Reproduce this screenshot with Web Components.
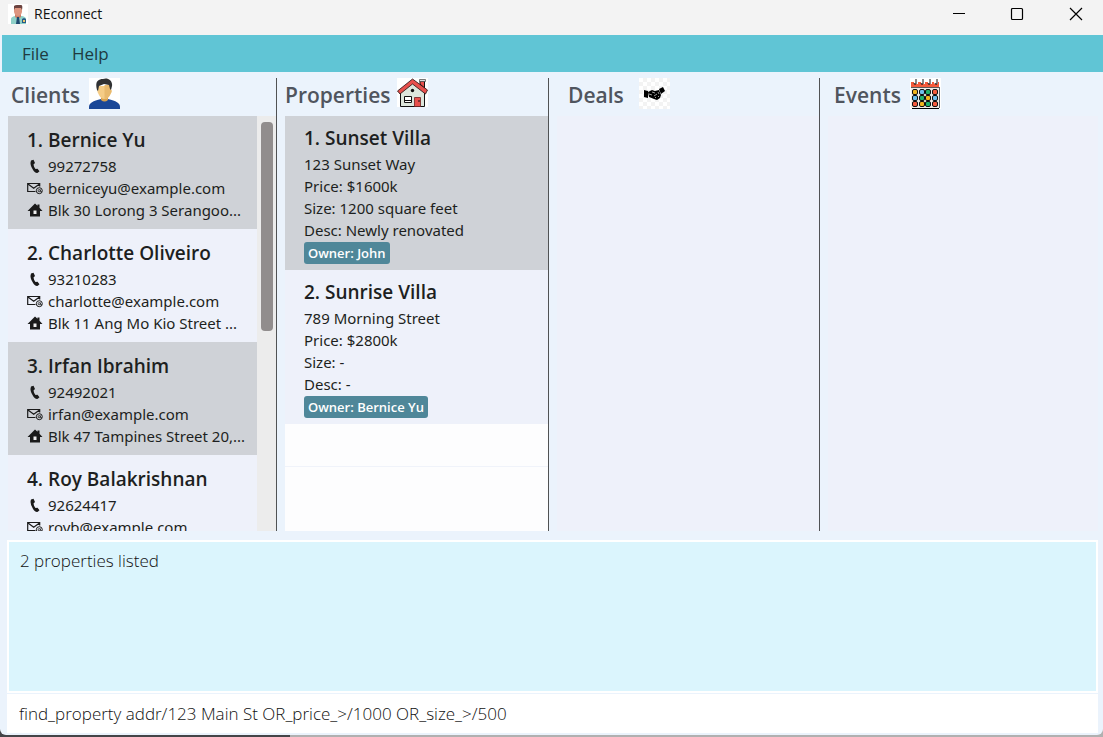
<!DOCTYPE html>
<html lang="en">
<head>
<meta charset="utf-8">
<title>REconnect</title>
<style>
html, body { margin: 0; height: 100%; }
body { font-family: "Noto Sans", "Open Sans", sans-serif; font-size: 15px; color: #1d1f21; background: #b4b4b4; }
</style>
</head>
<body>
<re-app>
  <re-titlebar slot="title">REconnect</re-titlebar>
  <re-menu slot="menu"><button type="button">File</button><button type="button">Help</button></re-menu>
  <re-column heading="Clients" icon="person" scroll style="--indent:3px;--gap:9px;--lead:0px">
    <re-client name="1. Bernice Yu" phone="99272758" email="berniceyu@example.com" odd>Blk 30 Lorong 3 Serangoo...</re-client>
    <re-client name="2. Charlotte Oliveiro" phone="93210283" email="charlotte@example.com">Blk 11 Ang Mo Kio Street ...</re-client>
    <re-client name="3. Irfan Ibrahim" phone="92492021" email="irfan@example.com" odd>Blk 47 Tampines Street 20,...</re-client>
    <re-client name="4. Roy Balakrishnan" phone="92624417" email="royb@example.com">Blk 45 Aljunied Street 85...</re-client>
  </re-column>
  <re-column heading="Properties" icon="house" style="--indent:0px;--gap:6px">
    <re-property name="1. Sunset Villa" address="123 Sunset Way" price="$1600k" size="1200 square feet" desc="Newly renovated" odd>John</re-property>
    <re-property name="2. Sunrise Villa" address="789 Morning Street" price="$2800k" size="-" desc="-">Bernice Yu</re-property>
    <re-empty></re-empty>
  </re-column>
  <re-column heading="Deals" icon="deal" style="--indent:11px;--gap:15px"></re-column>
  <re-column heading="Events" icon="calendar" style="--indent:6px;--gap:9px;--line:0px"></re-column>
  <re-console slot="console" message="2 properties listed" command="find_property addr/123 Main St OR_price_&gt;/1000 OR_size_&gt;/500"></re-console>
</re-app>

<script>
const define = (name, render) => customElements.define(name, class extends HTMLElement {
  constructor() { super(); this.attachShadow({ mode: 'open' }); }
  connectedCallback() { this.shadowRoot.innerHTML = render(this); }
});
const attr = (el, n) => (el.getAttribute(n) || '').replace(/&/g, '&amp;').replace(/"/g, '&quot;').replace(/</g, '&lt;').replace(/>/g, '&gt;');

const checker = () => {
  let s = '';
  for (let y = 0; y < 8; y++) for (let x = 0; x < 8; x++) if ((x + y) % 2) s += `M${x * 4} ${y * 4}h4v4h-4z`;
  return s;
};
const days = () => {
  const c = ['#f2b51d', '#6fc0ee', '#1fb26b', '#f45b3c'];
  const grid = [[0, 1, 2, 3], [1, 2, 0, 1], [3, 0, 2, 3]];
  return grid.map((r, j) => r.map((k, i) => `<rect x="${[3, 10, 16, 23][i] - .5}" y="${[12, 18, 24][j] - .5}" width="5" height="5" rx="1.500" fill="${c[k]}" stroke="#111" stroke-width="1"/>`).join('')).join('');
};
const pictures = {
  person: `<rect width="31" height="31" fill="#fff"/>
    <path d="M0 31v-2c0-4 4-6 12-8h7c8 2 12 4 12 8v2z" fill="#1b4797"/>
    <path d="M12 18h7v4q-3.500 3-7 0z" fill="#d7a250"/>
    <path d="M9 8h13v4q1 0 .5 2l-1 2q-2 5-6 5t-6-5l-1-2q-.5-2 .5-2z" fill="#f5cc86"/>
    <path d="M15.500 7H22v5q1 0 .5 2l-1 2q-2 5-6 5z" fill="#e8b96d"/>
    <path d="M8 12C6 5 8 1 14 1c4-2 10 1 9 7l-1 4-1-1-1-4-5-1-5 2-1 5z" fill="#303133"/>`,
  house: `<rect width="31" height="29" fill="#fff"/>
    <path d="M3.500 13L15.500 4l12 9v15.500h-24z" fill="#dde6dc" stroke="#111"/>
    <path d="M23 3h4.500v7L23 6z" fill="#e8504c" stroke="#111"/><path d="M22.500 1.500h6v2h-6z" fill="#ddd" stroke="#444" stroke-width=".7"/>
    <path d="M.500 13L15.500 1l15 11-2 4-13-10L3 16z" fill="#e8504c" stroke="#201010" stroke-width=".8"/>
    <circle cx="15.500" cy="12.500" r="1.700" fill="#111"/>
    <path d="M17.500 19.500h6v9h-6z" fill="#e8504c" stroke="#702020" stroke-width=".8"/><path d="M22 22v2" stroke="#111"/>
    <path d="M7.500 18.500h7v6h-7zM7 22.500h8" fill="#fff" stroke="#111"/>`,
  deal: `<rect width="31" height="31" fill="#fff"/><path d="${checker()}" fill="#f3f3f3"/>
    <path d="M5 12l4 1v7l-4-1z" fill="#000"/><path d="M9 14l4-2 3 1 4-1 2 5-1 3-3 2-3-1-5-2z" fill="#000"/><path d="M20 11l4-2 2 4-4 3z" fill="#000"/>
    <path d="M10 16l3 1M13 14l3 1M15 18l3-2M19 14l1 2M16 20l1-1M19 19l1-1" stroke="#fff" stroke-width=".6"/>`,
  calendar: `<rect width="31" height="31" fill="#fff"/>
    <path d="M1 9h28v21H1z" fill="#f3eee9"/><path d="M1 4h28v5H1z" fill="#f45b3c"/>
    <path d="M1 9.500h28M29.500 9v21" stroke="#333" stroke-width=".8"/><path d="M2 30.500h27" stroke="#000"/>
    <path d="M4 2h4v4H4zM11 2h4v4h-4zM18 2h4v4h-4zM24 2h4v4h-4z" fill="#fff"/>
    <path d="M6 1v5q-2 1-2-1M13 1v5q-2 1-2-1M20 1v5q-2 1-2-1M27 1v5q-2 1-2-1" fill="none" stroke="#111"/>${days()}`
};

define('re-app', () => `
<style>
  :host { display: flex; flex-direction: column; height: 100vh; }
  .window { flex: 1; min-height: 0; display: flex; flex-direction: column; background: #ebf3fc; border-radius: 0 0 6px 6px; overflow: hidden; }
  .columns { flex: 1; min-height: 0; display: grid; grid-template-columns: 269fr 272fr 271fr 278fr; grid-template-rows: minmax(0, 1fr); padding: 6px 5px 9px 8px; }
  .edge { flex: none; height: 8px; margin-top: -6px; z-index: -1; background: linear-gradient(90deg, #444548 290px, #b0b0b0 290px); }
</style>
<div class="window">
  <slot name="title"></slot><slot name="menu"></slot>
  <main class="columns"><slot></slot></main>
  <slot name="console"></slot>
</div>
<div class="edge"></div>`);

define('re-titlebar', () => `
<style>
  :host { flex: none; display: flex; align-items: center; height: 27px; padding: 0 20px 5px 8px; border-bottom: 3px solid #f3f3f3; background: #f3f3f3; font: 14px "Open Sans", sans-serif; color: #111; }
  .name { flex: 1; margin-left: 6px; }
  button { border: 0; padding: 0; margin-left: 45px; width: 14px; height: 14px; background: none; color: #000; display: block; }
  button:nth-of-type(2) { margin-left: 44px; }
  svg { display: block; }
</style>
<svg width="20" height="20" viewBox="0 0 20 20" aria-hidden="true"><rect width="20" height="20" fill="#fff"/>
  <path d="M3 20v-5q0-2 4-3h7q4 1 4 3v5z" fill="#8fd0c8"/><path d="M7 10h6v3l-3 2-3-2z" fill="#c97f68"/>
  <path d="M6 4h8v4q-1 4-4 4T6 8z" fill="#dd9580"/><path d="M6 6V2q1-1 3-1h4q2 0 1 5l-1-2H7z" fill="#6b4340"/>
  <path d="M9 13h2l1 7H8z" fill="#1f4a70"/><path d="M14 19v-4l2-1 2 1v4z" fill="#275a86"/><path d="M15 16h2v2h-2z" fill="#e9c66c"/></svg>
<span class="name"><slot></slot></span>
<button type="button" aria-label="Minimize"><svg width="14" height="14"><path d="M1 6.500h12" stroke="currentColor"/></svg></button>
<button type="button" aria-label="Maximize"><svg width="14" height="14"><rect x="1.500" y="1.500" width="11" height="11" rx="1" fill="none" stroke="currentColor" stroke-width="1.200"/></svg></button>
<button type="button" aria-label="Close"><svg width="14" height="14"><path d="M1 1l12 12M13 1L1 13" stroke="currentColor" stroke-width="1.200"/></svg></button>`);

define('re-menu', () => `
<style>
  :host { flex: none; display: flex; align-items: center; gap: 23px; height: 37px; margin-left: 2px; padding-left: 20px; background: #60c5d5; }
  ::slotted(button) { border: 0; padding: 0; background: none; font: 17px "Open Sans", sans-serif; color: #1f3a40; }
</style><slot></slot>`);

define('re-column', el => `
<style>
  :host { display: flex; flex-direction: column; min-width: 0; padding-left: var(--lead, 8px); border-right: var(--line, 1px) solid #505254; }
  header { flex: none; box-sizing: border-box; display: flex; align-items: flex-start; gap: var(--gap); height: 38px; padding-left: var(--indent); }
  h2 { margin: 0; padding-top: 2px; font: 600 21px/30px "Open Sans", sans-serif; color: #50555e; }
  svg { display: block; flex: none; }
  .body { flex: 1; min-height: 0; display: flex; background: #eef1fa; }
  .list { flex: 1; min-width: 0; overflow: hidden; display: flex; flex-direction: column; }
  .track { flex: none; width: 19px; background: #ececec; }
  .thumb { height: 209px; margin: 6px 3px 0 4px; border-radius: 4px; background: #918d8d; }
</style>
<header><h2>${attr(el, 'heading')}</h2><svg width="31" height="31" viewBox="0 0 31 31" aria-hidden="true">${pictures[el.getAttribute('icon')]}</svg></header>
<div class="body"><div class="list"><slot></slot></div>${el.hasAttribute('scroll') ? '<div class="track"><div class="thumb"></div></div>' : ''}</div>`);

define('re-client', el => `
<style>
  :host { flex: none; display: block; box-sizing: border-box; height: 113px; padding: 10px 0 8px 19px; background: #eef1fa; }
  :host([odd]) { background: #cfd2d7; }
  h3 { margin: 0; font: 600 19px/29px "Open Sans", sans-serif; white-space: nowrap; }
  p { margin: 0; display: flex; align-items: center; gap: 5px; line-height: 22px; white-space: nowrap; }
  svg { flex: none; }
</style>
<h3>${attr(el, 'name')}</h3>
<p><svg width="16" height="16" aria-hidden="true"><path d="M4 2.500l2.500-.8L8 5 6.500 6.500q.3 2.500 2 4.500l2-.3 2 2.600-1.700 1.500q-3 .6-5-3.300Q2.500 6.500 4 2.500z" fill="#1a1a1a"/></svg><span>${attr(el, 'phone')}</span></p>
<p><svg width="16" height="16" aria-hidden="true"><path d="M8.500 11.500H.700v-8h12v3M1 4l5.700 4.300L12.500 4" fill="none" stroke="#1a1a1a" stroke-width="1.200"/><circle cx="12.300" cy="10.700" r="3" fill="none" stroke="#1a1a1a"/><circle cx="12.200" cy="10.700" r="1.100" fill="none" stroke="#1a1a1a" stroke-width=".8"/><path d="M13.500 9.500v2.200h1.500" fill="none" stroke="#1a1a1a" stroke-width=".7"/></svg><span>${attr(el, 'email')}</span></p>
<p><svg width="16" height="16" aria-hidden="true"><path d="M8 1.500l2.500 2.300V2.500h2v3.200L15.500 9H13v5.500H3V9H.500z" fill="#1a1a1a"/><path d="M6.500 8.500h3V12h-3z" fill="#eee"/></svg><span><slot></slot></span></p>`);

define('re-property', el => `
<style>
  :host { flex: none; display: block; box-sizing: border-box; height: 154px; padding: 8px 0 6px 19px; background: #eef1fa; }
  :host([odd]) { background: #cfd2d7; }
  h3 { margin: 0; font: 600 19px/29px "Open Sans", sans-serif; }
  p { margin: 0; line-height: 22px; white-space: nowrap; }
  .tag { display: block; width: fit-content; margin-top: 1px; padding: 0 4px; border-radius: 3px; background: #4f8799; color: #fff; font: 600 13px/22px "Open Sans", sans-serif; }
</style>
<h3>${attr(el, 'name')}</h3><p>${attr(el, 'address')}</p><p>Price: ${attr(el, 'price')}</p><p>Size: ${attr(el, 'size')}</p><p>Desc: ${attr(el, 'desc')}</p>
<span class="tag">Owner: <slot></slot></span>`);

define('re-empty', () => `
<style>:host { flex: 1; display: block; background: #fdfdfe; } div { height: 42px; border-bottom: 1px solid #f0f3fa; }</style><div></div>`);

define('re-console', el => `
<style>
  :host { flex: none; display: flex; flex-direction: column; gap: 1px; padding: 0 5px 2px 7px; }
  textarea, input { display: block; box-sizing: border-box; width: 100%; margin: 0; border-radius: 0; outline: 0; resize: none; color: #111; font: 300 17px/24px "Open Sans", sans-serif; }
  textarea { height: 153px; padding: 7px 11px; border: 2px solid #fff; background: #dbf5fd; }
  input { height: 39px; padding: 0 12px; border: 0; background: #fff; }
</style>
<textarea readonly aria-label="Result">${attr(el, 'message')}</textarea>
<input type="text" aria-label="Command" value="${attr(el, 'command')}">`);
</script>
</body>
</html>
